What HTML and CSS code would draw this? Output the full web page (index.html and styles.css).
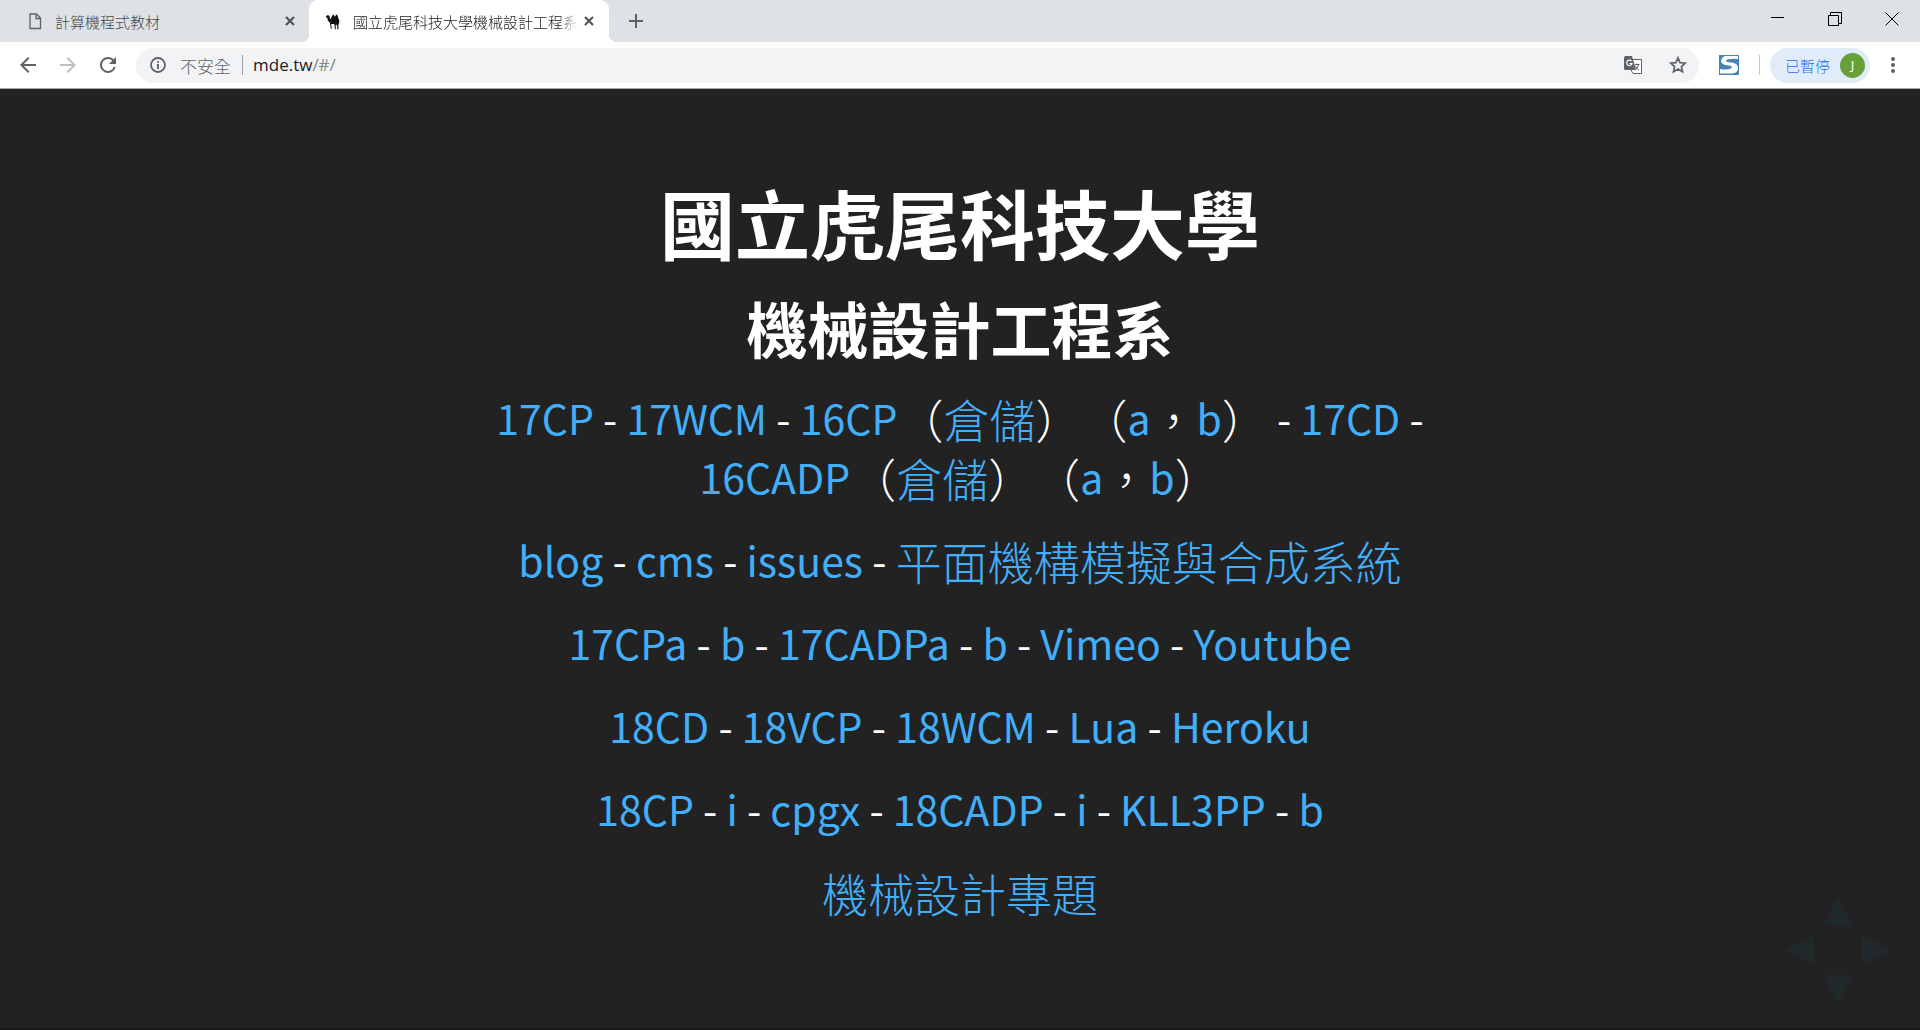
FILE: index.html
```html
<!DOCTYPE html>
<html lang="zh-Hant">
<head>
<meta charset="utf-8">
<title>國立虎尾科技大學機械設計工程系</title>
<link rel="stylesheet" href="styles.css">
</head>
<body>
<header class="browser">
  <div class="tabstrip">
    <div class="tab">
      <svg class="tab-icon" viewBox="0 0 16 18"><path d="M3 2h6.500l4 4v10.500H3zM9 2v4.500h4.500" fill="none" stroke="#5f6368" stroke-width="1.300"/></svg>
      <span class="tab-title">計算機程式教材</span>
      <button class="tab-close" aria-label="關閉"><svg viewBox="0 0 10 10"><path d="M1 1l8 8M9 1L1 9"/></svg></button>
    </div>
    <div class="tab active">
      <svg class="tab-icon" viewBox="0 0 16 18"><path d="M1 4l2-1 1.500 1 .5 3 1-.5 1-2.500 1.400-1.700 1.100 2.200.8-.3 1-2 1.400 1.500.8 3 .9 2-.5 3-.6 1 .2 4.500h-1.100l-.4-4-.9-.8-.5 1.800.3 3h-1l-.4-3.500-.2-1.700H6.500L6 12.500 7 16.500H5.800L5 12 4.500 10 3 9 2.300 6 1 5.300z" fill="#111"/></svg>
      <span class="tab-title">國立虎尾科技大學機械設計工程系</span>
      <button class="tab-close" aria-label="關閉"><svg viewBox="0 0 10 10"><path d="M1 1l8 8M9 1L1 9"/></svg></button>
    </div>
    <button class="new-tab" aria-label="新分頁"><svg viewBox="0 0 14 14"><path d="M7 0v14M0 7h14" stroke="#5f6368" stroke-width="2"/></svg></button>
    <div class="window-buttons">
      <button aria-label="最小化"><svg viewBox="0 0 14 14"><path d="M0 5.500h13"/></svg></button>
      <button aria-label="還原"><svg viewBox="0 0 14 14"><path d="M.5 3.500h10v10H.5zM2.500 3V.5h11v11H11"/></svg></button>
      <button aria-label="關閉視窗"><svg viewBox="0 0 14 14"><path d="M.5.500l13 13M13.500.500l-13 13"/></svg></button>
    </div>
  </div>
  <div class="toolbar">
    <button class="nav" aria-label="上一頁"><svg viewBox="0 0 24 24"><path d="M20 11H7.830l5.590-5.590L12 4l-8 8 8 8 1.410-1.410L7.830 13H20z"/></svg></button>
    <button class="nav disabled" aria-label="下一頁"><svg viewBox="0 0 24 24"><path d="M4 11h12.170l-5.590-5.590L12 4l8 8-8 8-1.410-1.410L16.170 13H4z"/></svg></button>
    <button class="nav" aria-label="重新載入"><svg viewBox="0 0 24 24"><path d="M17.650 6.350A8 8 0 1 0 19.730 14h-2.080A6 6 0 1 1 12 6c1.660 0 3.140.69 4.220 1.780L13 11h7V4z"/></svg></button>
    <div class="omnibox">
      <svg class="info" viewBox="0 0 16 16"><circle cx="8" cy="8" r="7" fill="none" stroke="#5f6368" stroke-width="1.800"/><path d="M8 7v5M8 4v1.800" stroke="#5f6368" stroke-width="1.900"/></svg>
      <span class="insecure">不安全</span>
      <span class="url">mde.tw<span class="path">/#/</span></span>
      <button class="omni-btn" aria-label="翻譯"><svg viewBox="0 0 18 18"><path d="M7 3.500h10.500v14H9L7 14" fill="#fff" stroke="#5f6368"/><path d="M0 1.500Q0 0 1.500 0H8l4 14H1.500Q0 14 0 12.500z" fill="#5f6368"/><path d="M7.500 5.200A2.700 2.700 0 1 0 8 7.500H5.500" fill="none" stroke="#fff" stroke-width="1.200"/><path d="M10.500 8.500h5M13 7.500v1M14.500 8.500Q14 12 11 14M11.500 10Q12.500 13 15 14" fill="none" stroke="#5f6368"/></svg></button>
      <button class="omni-btn" aria-label="加入書籤"><svg viewBox="0 0 18 18"><path d="M9 1.800l2.100 4.800 5.200.5-3.900 3.500 1.100 5.100L9 13l-4.500 2.700 1.100-5.100L1.700 7.100l5.200-.5z" fill="none" stroke="#5f6368" stroke-width="1.700"/></svg></button>
    </div>
    <button class="extension" aria-label="擴充功能"><svg viewBox="0 0 20 20"><path d="M0 0h20v20H0z" fill="#4584b8"/><path d="M1 1h5Q1 3 2.500 7.500 4 10.500 10 10.500q4 .5 2.500 2.500Q9 15.500 1 14v4.500h12q6-.5 6-5.500 0-5-7-5.500Q6 7 7 5.500 9 3 19 4V1z" fill="#fff"/></svg></button>
    <span class="divider"></span>
    <button class="profile">已暫停<span class="avatar">J</span></button>
    <button class="menu" aria-label="選單"><svg viewBox="0 0 4 16"><circle cx="2" cy="2" r="2"/><circle cx="2" cy="8" r="2"/><circle cx="2" cy="14" r="2"/></svg></button>
  </div>
</header>
<main class="deck">
  <section class="slide">
    <h1>國立虎尾科技大學</h1>
    <h2>機械設計工程系</h2>
    <p><a href="#">17CP</a> - <a href="#">17WCM</a> - <a href="#">16CP</a><span class="han">（<a href="#">倉儲</a>）（</span><a href="#">a</a><span class="han">，</span><a href="#">b</a><span class="han">）</span> - <a href="#">17CD</a> - <a href="#">16CADP</a><span class="han">（<a href="#">倉儲</a>）（</span><a href="#">a</a><span class="han">，</span><a href="#">b</a><span class="han">）</span></p>
    <p><a href="#">blog</a> - <a href="#">cms</a> - <a href="#">issues</a> - <a class="han" href="#">平面機構模擬與合成系統</a></p>
    <p><a href="#">17CPa</a> - <a href="#">b</a> - <a href="#">17CADPa</a> - <a href="#">b</a> - <a href="#">Vimeo</a> - <a href="#">Youtube</a></p>
    <p><a href="#">18CD</a> - <a href="#">18VCP</a> - <a href="#">18WCM</a> - <a href="#">Lua</a> - <a href="#">Heroku</a></p>
    <p><a href="#">18CP</a> - <a href="#">i</a> - <a href="#">cpgx</a> - <a href="#">18CADP</a> - <a href="#">i</a> - <a href="#">KLL3PP</a> - <a href="#">b</a></p>
    <p><a class="han" href="#">機械設計專題</a></p>
  </section>
  <nav class="controls" aria-label="投影片導覽">
    <button class="up" aria-label="上"></button>
    <button class="left" aria-label="左"></button>
    <button class="right" aria-label="右"></button>
    <button class="down" aria-label="下"></button>
  </nav>
</main>
</body>
</html>
```
FILE: styles.css
```css
* { box-sizing: border-box; }
body {
  margin: 0;
  min-height: 100vh;
  display: flex;
  flex-direction: column;
  background: #222;
  font-family: "Noto Sans CJK TC", sans-serif;
}
button {
  border: 0;
  padding: 0;
  background: none;
  font: inherit;
  color: inherit;
}
svg { display: block; flex: none; }

/* Tab strip */
.tabstrip {
  display: flex;
  height: 42px;
  background: #dee1e6;
}
.tab {
  display: flex;
  align-items: center;
  width: 309px;
  padding: 0 14px 0 27px;
  font-size: 15px;
  font-weight: 300;
  color: #45484c;
}
.tab.active {
  position: relative;
  width: 300px;
  padding: 0 15px 0 16px;
  background: #fff;
  border-radius: 9px 9px 0 0;
  color: #222;
}
.tab.active::before,
.tab.active::after {
  content: "";
  position: absolute;
  bottom: 0;
  width: 8px;
  height: 8px;
}
.tab.active::before {
  right: 100%;
  background: radial-gradient(circle at 0 0, transparent 8px, #fff 8px);
}
.tab.active::after {
  left: 100%;
  background: radial-gradient(circle at 100% 0, transparent 8px, #fff 8px);
}
.tab-icon { width: 16px; height: 18px; }
.tab-title {
  flex: 1;
  min-width: 0;
  margin: 0 6px 0 12px;
  overflow: hidden;
  white-space: nowrap;
}
.active .tab-title {
  -webkit-mask-image: linear-gradient(to right, #000 92%, transparent);
  mask-image: linear-gradient(to right, #000 92%, transparent);
}
.tab-close svg { width: 10px; height: 10px; }
.tab-close path { stroke: #4b4e52; stroke-width: 2; }
.new-tab { margin-left: 20px; }
.new-tab svg { width: 14px; height: 14px; }
.window-buttons {
  display: flex;
  margin-left: auto;
}
.window-buttons button {
  display: flex;
  justify-content: center;
  width: 57px;
  padding-top: 12px;
}
.window-buttons svg { width: 14px; height: 14px; }
.window-buttons path { fill: none; stroke: #000; }

/* Toolbar */
.toolbar {
  display: flex;
  align-items: center;
  height: 47px;
  padding: 0 25px 0 16px;
  background: #fff;
  border-bottom: 1px solid #aaa;
}
.nav { width: 24px; margin-right: 16px; }
.nav svg { width: 24px; height: 24px; fill: #5f6368; }
.disabled svg { fill: #bdc1c6; }
.omnibox {
  flex: 1;
  display: flex;
  align-items: center;
  height: 35px;
  padding: 0 12px 0 14px;
  border-radius: 18px;
  background: #f1f3f4;
  font-size: 17px;
}
.info { width: 16px; height: 16px; }
.insecure {
  margin: 0 11px 0 14px;
  font-weight: 300;
  color: #5f6368;
}
.url {
  flex: 1;
  padding-left: 10px;
  border-left: 1px solid #9aa0a6;
  font-family: "Open Sans", sans-serif;
  line-height: 20px;
  color: #202124;
}
.path { color: #80868b; }
.omni-btn { margin-left: 27px; }
.omni-btn svg { width: 18px; height: 18px; }
.extension { margin-left: 20px; }
.extension svg { width: 20px; height: 20px; }
.divider {
  width: 1px;
  height: 20px;
  margin: 0 10px 0 20px;
  background: #c6c9cc;
}
.profile {
  display: flex;
  align-items: center;
  gap: 10px;
  height: 35px;
  padding: 0 5px 0 15px;
  border-radius: 18px;
  background: #e1ecfb;
  font-size: 15px;
  font-weight: 300;
  color: #1a73e8;
}
.avatar {
  width: 25px;
  border-radius: 50%;
  background: #689f38;
  font: 13px/25px "Noto Sans", sans-serif;
  color: #fff;
  text-align: center;
}
.menu { margin-left: 21px; }
.menu svg { width: 4px; height: 16px; fill: #5f6368; }

/* Slide */
.deck {
  position: relative;
  flex: 1;
  display: flex;
  flex-direction: column;
  align-items: center;
  justify-content: center;
  padding-top: 4px;
  border-bottom: 2px solid #191919;
}
.slide {
  width: 100%;
  max-width: 1060px;
  font-size: 41px;
  line-height: 59px;
  text-align: center;
  text-spacing-trim: space-all;
  color: #fff;
}
.slide h1, .slide h2 {
  font-weight: 700;
}
.slide h1 { margin: 0 0 24px; font-size: 75px; line-height: 90px; }
.slide h2 { margin: 0 0 24px; font-size: 61px; line-height: 73px; }
.slide p { margin: 0 0 24px; }
.slide a { color: #42affa; text-decoration: none; }
.han {
  font-size: 46px;
  font-weight: 300;
  line-height: 1;
  vertical-align: -3px;
}

/* Slide navigation arrows */
.controls {
  position: absolute;
  right: 29px;
  bottom: 25px;
  display: grid;
  grid-template-columns: 28px 28px 28px;
  gap: 11px;
}
.controls button {
  height: 28px;
  background: #22292d;
}
.up { grid-area: 1 / 2; clip-path: polygon(50% 0, 100% 100%, 0 100%); }
.left { grid-area: 2 / 1; clip-path: polygon(0 50%, 100% 0, 100% 100%); }
.right { grid-area: 2 / 3; clip-path: polygon(0 0, 100% 50%, 0 100%); }
.down { grid-area: 3 / 2; clip-path: polygon(0 0, 100% 0, 50% 100%); }
```
